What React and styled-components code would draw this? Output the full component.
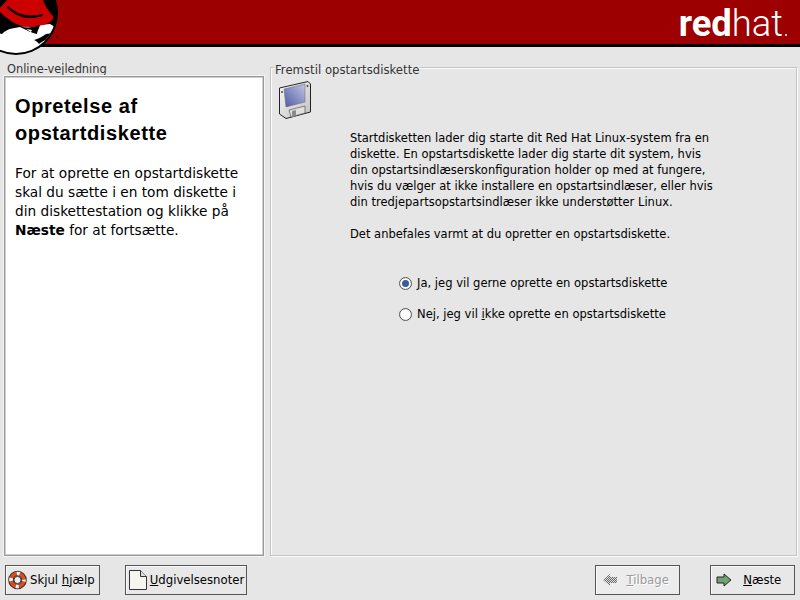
import React from "react";
import styled, { createGlobalStyle } from "styled-components";

const Global = createGlobalStyle`
  html, body { margin: 0; padding: 0; background: #e6e6e6; }
  body { font-family: "DejaVu Sans", sans-serif; color: #000; }
  #root { width: 800px; height: 600px; overflow: hidden; }
`;

const Page = styled.div`
  width: 800px; height: 600px; display: flex; flex-direction: column; background: #e6e6e6; position: relative;
`;
const Header = styled.header`
  height: 44px; background: #9c0000; border-bottom: 3px solid #000;
  display: flex; justify-content: flex-end; align-items: flex-start; flex: none;
`;
const Brand = styled.div`
  color: #fff; font-family: Roboto, "Liberation Sans", sans-serif; font-size: 36.4px; line-height: 44px;
  padding: 2px 13px 0 0; height: 42px; overflow: hidden;
  b { font-weight: 700; } span { font-weight: 300; }
`;
const BrandDot = styled.i`
  display: inline-block; width: 2px; height: 2px; background: #e8c8c8; margin-left: 2px;
`;
const Logo = styled.svg`
  position: absolute; left: 0; top: 0;
`;
const Main = styled.main`
  flex: 1; display: flex; gap: 6px; padding: 15px 3px 9px 4px; min-height: 0;
`;
const HelpPane = styled.section`
  width: 260px; flex: none; display: flex; flex-direction: column;
`;
const PaneLabel = styled.div`
  font-size: 11.4px; line-height: 14px; color: #333; padding-left: 3px; height: 14px;
`;
const HelpBox = styled.div`
  flex: 1; background: #fff; border: 1px solid #9a9a9a; box-shadow: 0 0 0 1px #cfcfcf inset;
  outline: 1px solid #f5f5f5; padding: 16px 10px 0 10px;
`;
const HelpTitle = styled.h1`
  margin: 0 0 17px; font-family: "Liberation Sans", sans-serif; font-size: 20px; line-height: 27px;
  font-weight: 700; letter-spacing: .6px;
`;
const HelpText = styled.p`
  margin: 0; font-size: 13.7px; line-height: 19px; white-space: pre-line;
`;
const Frame = styled.fieldset`
  flex: 1; margin: 0; min-width: 0; border: 1px solid #c4c4c4; border-radius: 0;
  box-shadow: 1px 1px 0 #fbfbfb, inset 1px 1px 0 #fbfbfb;
  padding: 0 0 0 7px; display: flex; flex-direction: column;
  legend { padding: 0 1px; margin-left: -4px; font-size: 11.7px; height: 10px; line-height: 16px; color: #333; }
`;
const DiskIcon = styled.svg`
  display: block; margin-top: 8px; flex: none;
`;
const Body = styled.p`
  margin: 10px 0 0 72px; width: 385px; font-size: 11.5px; line-height: 16px; color: #000; white-space: pre-line;
`;
const Options = styled.div`
  margin: 33px 0 0 121px; display: flex; flex-direction: column; gap: 15px;
`;
const Option = styled.label`
  display: flex; align-items: center; gap: 5px; font-size: 11.55px; line-height: 16px; height: 16px;
  u { text-underline-offset: 1px; }
`;
const Radio = styled.span`
  width: 13px; height: 13px; border-radius: 50%; box-sizing: border-box; flex: none;
  border: 1px solid #555; background: #fdfdfd;
  display: flex; align-items: center; justify-content: center;
  box-shadow: inset 0 0 1px #aaa;
  &::after { content: ""; width: 7px; height: 7px; border-radius: 50%;
    background: ${p => (p.$on ? "#3a5a9c" : "transparent")}; }
`;
const Footer = styled.footer`
  height: 35px; flex: none; display: flex; padding: 0 5px; align-items: flex-start; box-sizing: border-box;
`;
const Btn = styled.button`
  height: 30px; width: ${p => p.$w}px; margin-left: ${p => p.$ml || 0}px; box-sizing: border-box; padding: 0 0 0 ${p => p.$pl || 2}px;
  border: 1px solid #555; background: ${p => (p.$off ? "#ececec" : "#e8e8e8")};
  box-shadow: inset 1px 1px 0 #fbfbfb;
  display: flex; align-items: center; font-family: "DejaVu Sans", sans-serif; font-size: 11.7px;
  color: ${p => (p.$off ? "#9a9a9a" : "#000")};
  text-shadow: ${p => (p.$off ? "1px 1px 0 #fff" : "none")};
  u { text-underline-offset: 1px; }
`;
const BtnLabel = styled.span`
  margin-left: ${p => p.$ml}px; white-space: nowrap;
`;

const HatLogo = () => (
  <Logo width="62" height="60" viewBox="0 0 62 60">
    <defs>
      <clipPath id="inner"><circle cx="16" cy="13" r="40" /></clipPath>
    </defs>
    <circle cx="16" cy="13" r="42" fill="#000" />
    <g clipPath="url(#inner)">
      <path d="M-2 31 L20 27 L50 24 L60 30 L60 60 L-2 60Z" fill="#fff" />
      <path d="M-2 10 L9 -2 L42 -2 C45 6 49 12 53 16 C54 20 50 23 43 25 C35 27 28 28 22 26 C14 24 6 18 -2 10Z" fill="#cc0000" />
      <path d="M8 6 C14 11 20 15 27 15 C33 16 38 15 42 14 L43 16 C36 18 28 19 22 17 C16 15 11 11 7 8Z" fill="#000" />
      <path d="M-2 31 C3 25 10 24 15 26 C12 28 6 30 2 34 L-2 33Z" fill="#000" />
      <path d="M18 26 C24 28 32 28 40 25 C39 29 37 31 37 34 C32 33 26 30 18 26Z" fill="#000" />
      <path d="M26 29 L32 30 L31 32Z" fill="#fff" />
      <path d="M34 40 C38 39 42 37 46 34 C49 34 52 33 55 30 L52 42 C47 38 43 41 39 44 C38 42 36 41 34 40Z" fill="#000" />
    </g>
    <circle cx="57" cy="37" r="1" fill="#300" />
  </Logo>
);

const Disk = () => (
  <DiskIcon width="34" height="40" viewBox="0 0 34 40">
    <defs>
      <linearGradient id="dg" x1="0" y1="1" x2="1" y2="0">
        <stop offset="0" stopColor="#4e5aa4" />
        <stop offset="1" stopColor="#c0c4e2" />
      </linearGradient>
      <linearGradient id="db" x1="0" y1="0" x2="1" y2="1">
        <stop offset="0" stopColor="#f8f8f8" />
        <stop offset="1" stopColor="#c0c0c0" />
      </linearGradient>
    </defs>
    <path d="M1.5 8 L30 1.5 L32.5 4 L32.5 32 L8 38.5 L1.5 34 Z" fill="url(#db)" stroke="#222" strokeWidth="1" strokeLinejoin="round" />
    <path d="M6 9 L27 4 L27 22 L8 27 Z" fill="url(#dg)" stroke="#666" strokeWidth=".5" />
    <path d="M11 30 L27 26 L27 33 L13 37 Z" fill="#e0e0e0" stroke="#555" strokeWidth=".7" />
    <path d="M14 31 L18 30 L18 36 L14 37 Z" fill="#8a8a8a" />
    <circle cx="4" cy="12" r="1" fill="#444" />
    <circle cx="29.5" cy="6" r="1" fill="#444" />
  </DiskIcon>
);

const LifeBuoy = () => (
  <svg width="19" height="20" viewBox="0 0 19 20">
    <circle cx="9.5" cy="10" r="6.5" fill="none" stroke="#333" strokeWidth="5.6" />
    <circle cx="9.5" cy="10" r="6.5" fill="none" stroke="#e04a1c" strokeWidth="3.6" />
    <circle cx="9.5" cy="10" r="6.5" fill="none" stroke="#f6f6f6" strokeWidth="3.6" strokeDasharray="3 7.2" strokeDashoffset="1.5" />
    <circle cx="9.5" cy="10" r="3.6" fill="#ededed" stroke="#333" />
  </svg>
);

const Page2 = () => (
  <svg width="20" height="22" viewBox="0 0 20 22">
    <path d="M1.5 1.5 H12.5 L18.5 7.5 V20.5 H1.5 Z" fill="#f6f6ee" stroke="#333" />
    <path d="M12.5 1.5 V7.5 H18.5" fill="#ddd" stroke="#333" />
  </svg>
);

const BackArrow = () => (
  <svg width="16" height="14" viewBox="0 0 16 14">
    <defs>
      <pattern id="chk" width="2" height="2" patternUnits="userSpaceOnUse">
        <rect width="2" height="2" fill="#e2e2e2" />
        <rect width="1" height="1" fill="#666" />
        <rect x="1" y="1" width="1" height="1" fill="#666" />
      </pattern>
    </defs>
    <path d="M15 4 H8 V1 L1 7 L8 13 V10 H15 Z" fill="url(#chk)" />
  </svg>
);

const NextArrow = () => (
  <svg width="16" height="14" viewBox="0 0 16 14">
    <path d="M1 4 H8 V1 L15 7 L8 13 V10 H1 Z" fill="#74a074" stroke="#222" />
  </svg>
);

export default function App() {
  return (
    <Page>
      <Global />
      <Header>
        <Brand><b>red</b><span>hat</span><BrandDot /></Brand>
      </Header>
      <HatLogo />
      <Main>
        <HelpPane>
          <PaneLabel>Online-vejledning</PaneLabel>
          <HelpBox>
            <HelpTitle>Opretelse af<br />opstartdiskette</HelpTitle>
            <HelpText>
              For at oprette en opstartdiskette{"\n"}skal du sætte i en tom diskette i{"\n"}din diskettestation og klikke på{"\n"}<b>Næste</b> for at fortsætte.
            </HelpText>
          </HelpBox>
        </HelpPane>
        <Frame>
          <legend>Fremstil opstartsdiskette</legend>
          <Disk />
          <Body>
            Startdisketten lader dig starte dit Red Hat Linux-system fra en{"\n"}diskette. En opstartsdiskette lader dig starte dit system, hvis{"\n"}din opstartsindlæserskonfiguration holder op med at fungere,{"\n"}hvis du vælger at ikke installere en opstartsindlæser, eller hvis{"\n"}din tredjepartsopstartsindlæser ikke understøtter Linux.{"\n"}{"\n"}Det anbefales varmt at du opretter en opstartsdiskette.
          </Body>
          <Options>
            <Option><Radio $on /><span><u>J</u>a, jeg vil gerne oprette en opstartsdiskette</span></Option>
            <Option><Radio /><span>Nej, jeg vil <u>i</u>kke oprette en opstartsdiskette</span></Option>
          </Options>
        </Frame>
      </Main>
      <Footer>
        <Btn $w={95}><LifeBuoy /><BtnLabel $ml={3}>Skjul <u>h</u>jælp</BtnLabel></Btn>
        <Btn $w={123} $ml={25}><Page2 /><BtnLabel $ml={2}><u>U</u>dgivelsesnoter</BtnLabel></Btn>
        <Btn $w={85} $ml={348} $pl={6} $off><BackArrow /><BtnLabel $ml={8}><u>T</u>ilbage</BtnLabel></Btn>
        <Btn $w={85} $ml={30} $pl={5}><NextArrow /><BtnLabel $ml={11}><u>N</u>æste</BtnLabel></Btn>
      </Footer>
    </Page>
  );
}
